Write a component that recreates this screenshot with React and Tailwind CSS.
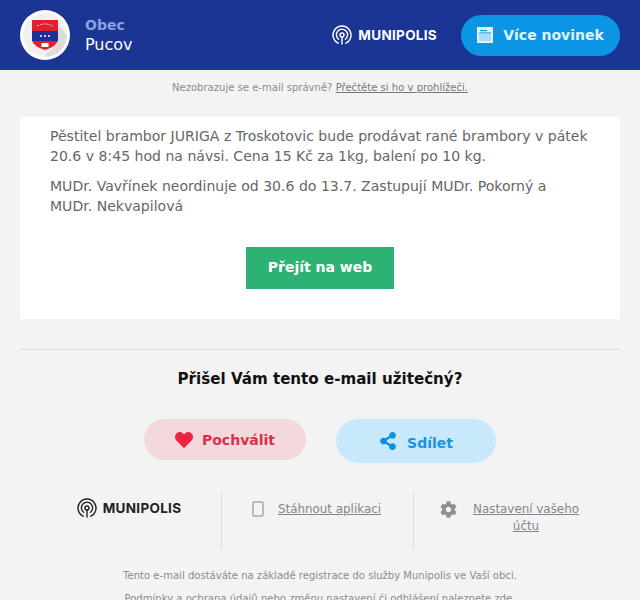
import { FaHeart, FaShareAlt, FaCog } from 'react-icons/fa'

function LogoMark({ className }) {
  return (
    <svg viewBox="0 0 20 20" fill="none" stroke="currentColor" strokeWidth="1.4" strokeLinecap="round" className={className}>
      <path d="M6.2 18.2A9 9 0 1 1 13.8 18.2" />
      <path d="M6.6 14.2A5.6 5.6 0 1 1 13.4 14.2" />
      <circle cx="10" cy="10" r="2" />
      <path d="M10 12v7" />
    </svg>
  )
}

function Logo({ className = '' }) {
  return (
    <div className={`flex items-center gap-[6px] ${className}`}>
      <LogoMark className="w-[20px] h-[20px]" />
      <span className="font-['Inter',sans-serif] font-bold text-[13.5px] tracking-[0.3px]">MUNIPOLIS</span>
    </div>
  )
}

function Crest() {
  return (
    <svg viewBox="0 0 50 50" className="w-[50px] h-[50px]">
      <defs>
        <clipPath id="crest-inner">
          <circle cx="25" cy="25" r="22" />
        </clipPath>
      </defs>
      <circle cx="25" cy="25" r="25" fill="#fff" />
      <circle cx="25" cy="25" r="22" fill="#f0f0f0" />
      <path d="M38 15V34L25 45L45 60L60 40Z" fill="#dcdcdc" clipPath="url(#crest-inner)" />
      <path d="M12 10H38V29C38 35 31 38 25 40C19 38 12 35 12 29Z" fill="#e0202c" />
      <rect x="12" y="21" width="26" height="10" fill="#1c2f96" />
      <path d="M17 16Q25 12 33 16" stroke="#f5c9c9" strokeWidth="1" fill="none" strokeDasharray="2 1" />
      <circle cx="21" cy="26" r="1" fill="#fff" />
      <circle cx="25" cy="26" r="1" fill="#fff" />
      <circle cx="29" cy="26" r="1" fill="#fff" />
      <rect x="21.5" y="33" width="7" height="4" fill="#fff" />
    </svg>
  )
}

export default function App() {
  return (
    <div className="h-[600px] overflow-hidden bg-[#f3f3f4] font-['DejaVu_Sans',sans-serif] text-[#666]">
      <header className="h-[70px] bg-[#1b3594] flex items-center justify-between px-[20px]">
        <div className="flex items-center gap-[15px]">
          <Crest />
          <div>
            <p className="text-[14px] leading-[20px] font-bold text-[#8c9fdf]">Obec</p>
            <p className="text-[16px] leading-[20px] text-white">Pucov</p>
          </div>
        </div>
        <div className="flex items-center gap-[24px]">
          <Logo className="text-white" />
          <a className="w-[159px] h-[41px] rounded-full bg-[#0a96e4] flex items-center justify-center gap-[10px] text-[14px] font-bold text-[#e0f3ff]">
            <svg viewBox="0 0 16 16" className="w-[16px] h-[16px]">
              <rect width="16" height="16" fill="#e0f3ff" />
              <rect x="2" y="7" width="12" height="7" fill="#a9ddfb" />
              <rect x="3" y="3" width="7" height="1.2" fill="#0a96e4" />
              <rect x="2" y="5.4" width="12" height="1" fill="#0a96e4" />
            </svg>
            Více novinek
          </a>
        </div>
      </header>

      <p className="h-[47px] pt-[12px] text-center text-[10.05px] leading-[12px] text-[#8a8a90]">
        Nezobrazuje se e-mail správně? <a className="underline text-[#77777d]">Přečtěte si ho v prohlížeči.</a>
      </p>

      <main className="mx-[20px] h-[202px] bg-white px-[30px] pt-[9px] text-[14.05px] leading-[20px]">
        <p>Pěstitel brambor JURIGA z Troskotovic bude prodávat rané brambory v pátek 20.6 v 8:45 hod na návsi. Cena 15 Kč za 1kg, balení po 10 kg.</p>
        <p className="mt-[10px]">MUDr. Vavřínek neordinuje od 30.6 do 13.7. Zastupují MUDr. Pokorný a MUDr. Nekvapilová</p>
        <div className="mt-[31px] flex justify-center">
          <a className="w-[148px] h-[42px] pb-[2px] bg-[#2eb273] text-white text-[14px] font-bold flex items-center justify-center">Přejít na web</a>
        </div>
      </main>

      <div className="mx-[20px] mt-[30px] border-t border-[#dcdcdc] pt-[18px]">
        <h2 className="text-center text-[15.1px] leading-[22px] font-bold text-[#111]">Přišel Vám tento e-mail užitečný?</h2>
        <div className="mt-[29px] flex items-start justify-center gap-[30px]">
          <a className="w-[162px] h-[41px] rounded-full bg-[#f3d8dc] flex items-center justify-center gap-[9px] text-[14px] font-bold text-[#d9304c]">
            <FaHeart className="w-[18px] h-[18px] text-[#ee2444]" />
            <span className="translate-y-[1px]">Pochválit</span>
          </a>
          <a className="w-[160px] h-[44px] rounded-full bg-[#c8e8fb] flex items-center justify-center gap-[10px] text-[14px] font-bold text-[#1a95dd]">
            <FaShareAlt className="w-[18px] h-[18px] text-[#0f8fe0]" />
            <span className="translate-y-[2px]">Sdílet</span>
          </a>
        </div>
      </div>

      <div className="mt-[30px] mx-[20px] flex items-stretch h-[56px] text-[11.9px] leading-[17px] text-[#85858c]">
        <div className="w-[201px] flex items-start justify-center pt-[5px] pl-[17px] text-[#222]">
          <Logo />
        </div>
        <div className="w-[192px] border-l border-[#dcdcdc] flex justify-center gap-[14px] pt-[8px] pr-[2px]">
          <svg viewBox="0 0 12 16" className="w-[12px] h-[16px] text-[#a6a6ae]" fill="none" stroke="currentColor" strokeWidth="1.5">
            <rect x="1" y="1" width="10" height="14" rx="1" />
          </svg>
          <a className="underline">Stáhnout aplikaci</a>
        </div>
        <div className="flex-1 border-l border-[#dcdcdc] flex justify-center gap-[15px] pt-[8px] pr-[14px]">
          <FaCog className="w-[17px] h-[17px] text-[#8f8f9c]" />
          <a className="underline text-center w-[108px]">Nastavení vašeho účtu</a>
        </div>
      </div>

      <div className="mt-[19px] text-center text-[10.05px] text-[#8a8a90]">
        <p className="leading-[16px]">Tento e-mail dostáváte na základě registrace do služby Munipolis ve Vaší obci.</p>
        <p className="mt-[7px] leading-[16px]">Podmínky a ochrana údajů nebo změnu nastavení či odhlášení naleznete zde.</p>
      </div>
    </div>
  )
}
